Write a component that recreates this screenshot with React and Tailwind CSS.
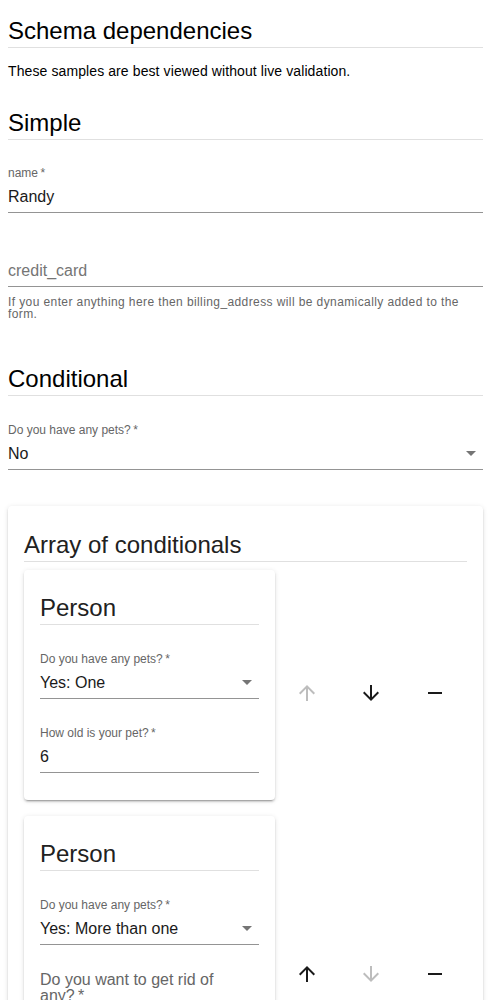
const font = "font-['Liberation_Sans',Arial,Helvetica,sans-serif]";

function Up({ disabled }) {
  return (
    <svg viewBox="0 0 24 24" className={"h-6 w-6 " + (disabled ? "fill-[#bdbdbd]" : "fill-[#1a1a1a]")}>
      <path d="M4 12l1.41 1.41L11 7.83V20h2V7.83l5.58 5.59L20 12l-8-8-8 8z" />
    </svg>
  );
}

function Down({ disabled }) {
  return (
    <svg viewBox="0 0 24 24" className={"h-6 w-6 " + (disabled ? "fill-[#bdbdbd]" : "fill-[#1a1a1a]")}>
      <path d="M20 12l-1.41-1.41L13 16.17V4h-2v12.17l-5.58-5.59L4 12l8 8 8-8z" />
    </svg>
  );
}

function Minus() {
  return (
    <svg viewBox="0 0 24 24" className="h-6 w-6 fill-[#1a1a1a]">
      <path d="M19 13H5v-2h14v2z" />
    </svg>
  );
}

function Title({ children, dark }) {
  return (
    <>
      <h5 className={"text-[24px] leading-[32px] " + (dark ? "text-[#212121]" : "text-black")}>{children}</h5>
      <div className="h-px bg-[#e0e0e0]" />
    </>
  );
}

function Field({ label, value, placeholder, select, className = "" }) {
  return (
    <div className={className}>
      <div className="h-4 text-[12px] leading-[16px] text-[#666]">{label}</div>
      <div className="relative mt-[6px] border-b border-[#949494] pb-[6px]">
        <div className={"h-[19px] text-[16px] leading-[19px] " + (placeholder ? "text-[#757575]" : "text-[#1a1a1a]")}>
          {placeholder || value}
        </div>
        {select && (
          <svg viewBox="0 0 24 24" className="absolute right-0 top-[-3px] h-6 w-6 fill-[#757575]">
            <path d="M7 10l5 5 5-5z" />
          </svg>
        )}
      </div>
    </div>
  );
}

function Radio({ label, checked }) {
  return (
    <div className="flex h-[42px] items-center gap-2 text-[16px] text-[#212121]">
      <span className="flex h-5 w-5 items-center justify-center rounded-full border-2 border-[#757575]">
        {checked && <span className="h-2.5 w-2.5 rounded-full bg-[#757575]" />}
      </span>
      {label}
    </div>
  );
}

function Buttons({ upDisabled, downDisabled }) {
  return (
    <div className="flex">
      <button className="flex h-9 w-16 items-center justify-center"><Up disabled={upDisabled} /></button>
      <button className="flex h-9 w-16 items-center justify-center"><Down disabled={downDisabled} /></button>
      <button className="flex h-9 w-16 items-center justify-center"><Minus /></button>
    </div>
  );
}

const shadow = "shadow-[0px_3px_1px_-2px_rgba(0,0,0,0.2),0px_2px_2px_0px_rgba(0,0,0,0.14),0px_1px_5px_0px_rgba(0,0,0,0.12)]";

export default function App() {
  return (
    <div className={"min-h-screen bg-white px-2 pt-[15px] " + font}>
      <Title>Schema dependencies</Title>
      <p className="mt-[13px] text-[14px] leading-[20px] tracking-[0.1px] text-black">
        These samples are best viewed without live validation.
      </p>

      <div className="mt-[26px]">
        <Title>Simple</Title>
      </div>
      <Field className="mt-[25px]" label={"name\u2009*"} value="Randy" />
      <Field className="mt-[26px]" label="" placeholder="credit_card" />
      <p className="mt-[9px] text-[12px] leading-[12px] tracking-[0.4px] text-[#666]">
        If you enter anything here then billing_address will be dynamically added to the form.
      </p>

      <div className="mt-[43px]">
        <Title>Conditional</Title>
      </div>
      <Field className="mt-[26px]" label={"Do you have any pets?\u2009*"} value="No" select />

      <div className={"mt-[36px] rounded bg-white px-4 pb-4 pt-[23px] " + shadow}>
        <Title dark>Array of conditionals</Title>

        <div className="mt-2 flex items-center">
          <div className={"mb-4 min-w-0 flex-1 rounded bg-white px-4 pb-[27px] pt-[22px] " + shadow}>
            <Title dark>Person</Title>
            <Field className="mt-[26px]" label={"Do you have any pets?\u2009*"} value="Yes: One" select />
            <Field className="mt-[26px]" label={"How old is your pet?\u2009*"} value="6" />
          </div>
          <Buttons upDisabled />
        </div>

        <div className="flex items-center">
          <div className={"mb-4 min-w-0 flex-1 rounded bg-white px-4 pb-[27px] pt-[22px] " + shadow}>
            <Title dark>Person</Title>
            <Field className="mt-[26px]" label={"Do you have any pets?\u2009*"} value="Yes: More than one" select />
            <div className="mt-[27px] max-w-[calc(100%-24px)] text-[16px] leading-[16px] text-[#666]">
              Do you want to get rid of any?{"\u2009*"}
            </div>
            <Radio label="Yes" />
            <Radio label="No" />
          </div>
          <Buttons downDisabled />
        </div>
      </div>
    </div>
  );
}
